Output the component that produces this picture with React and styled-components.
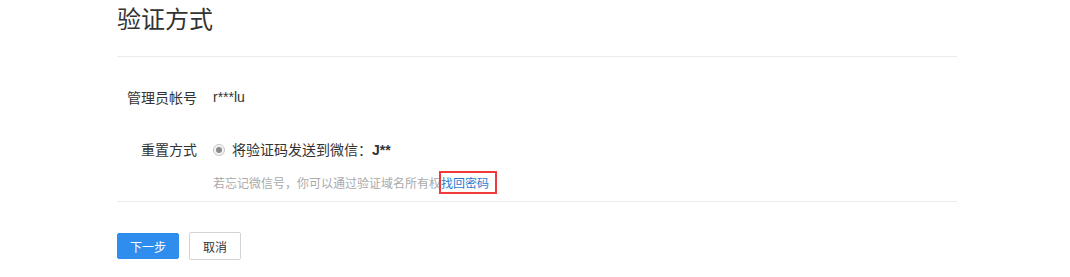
import React from "react";
import styled, { createGlobalStyle } from "styled-components";

const Global = createGlobalStyle`
  html, body { margin: 0; padding: 0; background: #fff; }
  body { font-family: "Liberation Sans", "Noto Sans CJK SC", sans-serif; color: #333; }
`;

const Page = styled.div`
  width: 840px;
  padding-left: 117px;
`;

const Header = styled.div`
  height: 36px;
  padding-bottom: 20px;
  border-bottom: 1px solid #ebebeb;
`;

const Title = styled.h1`
  margin: 0;
  font-family: "Noto Sans CJK SC", sans-serif;
  font-weight: 400;
  font-size: 24px;
  line-height: 36px;
  color: #333;
`;

const Form = styled.div`
  padding-top: 30px;
  padding-bottom: 8px;
  border-bottom: 1px solid #ebebeb;
  display: flex;
  flex-direction: column;
`;

const Row = styled.div`
  display: grid;
  grid-template-columns: 80px 1fr;
  column-gap: 16px;
  margin-top: ${(p) => p.$gap || 0}px;
  font-size: 14px;
  line-height: 20px;
`;

const Label = styled.div`
  text-align: right;
  font-family: "Noto Sans CJK SC", sans-serif;
  color: #333;
`;

const Value = styled.div`
  color: #333;
`;

const Radio = styled.label`
  display: flex;
  align-items: center;
  gap: 7px;
  font-family: "Noto Sans CJK SC", sans-serif;
  color: #333;
`;

const Dot = styled.span`
  width: 10px;
  height: 10px;
  border: 1px solid #c4c4c4;
  border-radius: 50%;
  background: #f4f4f4;
  display: flex;
  align-items: center;
  justify-content: center;
  &::after {
    content: "";
    width: 6px;
    height: 6px;
    border-radius: 50%;
    background: #8a8a8a;
  }
`;

const Bold = styled.b`
  font-family: "Liberation Sans", sans-serif;
  font-weight: 700;
`;

const Hint = styled.div`
  grid-column: 2;
  margin-top: 13px;
  font-size: 12px;
  line-height: 20px;
  color: #aaa;
  font-family: "Noto Sans CJK SC", sans-serif;
`;

const Link = styled.a`
  position: relative;
  display: inline-block;
  line-height: 20px;
  color: #2b7bd3;
  text-decoration: none;
  &::after {
    content: "";
    position: absolute;
    left: -2px;
    right: -8px;
    top: -2px;
    bottom: -1px;
    border: 2px solid #ef3b3b;
  }
`;

const Actions = styled.div`
  display: flex;
  align-items: center;
  gap: 10px;
  margin-top: 30px;
`;

const Button = styled.button`
  box-sizing: border-box;
  height: ${(p) => (p.$primary ? 26 : 28)}px;
  width: ${(p) => (p.$primary ? 62 : 52)}px;
  padding: 0;
  font-family: "Noto Sans CJK SC", sans-serif;
  font-size: 12px;
  border-radius: 2px;
  border: 1px solid ${(p) => (p.$primary ? "#2e8ded" : "#d3d3d3")};
  background: ${(p) => (p.$primary ? "#2e8ded" : "#fff")};
  color: ${(p) => (p.$primary ? "#fff" : "#333")};
`;

export default function App() {
  return (
    <>
      <Global />
      <Page>
        <Header>
          <Title>验证方式</Title>
        </Header>
        <Form>
          <Row>
            <Label>管理员帐号</Label>
            <Value>r***lu</Value>
          </Row>
          <Row $gap={32}>
            <Label>重置方式</Label>
            <Radio>
              <Dot />
              <span>
                将验证码发送到微信：<Bold>J**</Bold>
              </span>
            </Radio>
            <Hint>
              若忘记微信号，你可以通过验证域名所有权<Link>找回密码</Link>
            </Hint>
          </Row>
        </Form>
        <Actions>
          <Button $primary>下一步</Button>
          <Button>取消</Button>
        </Actions>
      </Page>
    </>
  );
}
